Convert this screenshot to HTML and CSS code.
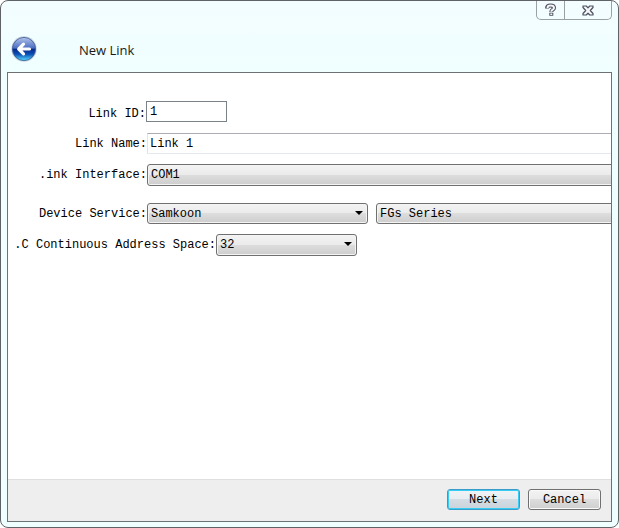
FILE: index.html
```html
<!DOCTYPE html>
<html lang="en">
<head>
<meta charset="utf-8">
<title>New Link</title>
<link rel="stylesheet" href="styles.css">
</head>
<body>
<div class="window">
  <header class="titlebar">
    <div class="heading">
      <button class="back" type="button" aria-label="Back">
        <svg width="26" height="26" viewBox="0 0 26 26" aria-hidden="true">
          <defs>
            <linearGradient id="orb" x1="0" y1="0" x2="0" y2="1">
              <stop offset="0" stop-color="#b4c4ea"/>
              <stop offset=".45" stop-color="#4c70c4"/>
              <stop offset=".52" stop-color="#08298c"/>
              <stop offset=".72" stop-color="#0a4fb4"/>
              <stop offset="1" stop-color="#58dcff"/>
            </linearGradient>
          </defs>
          <circle cx="13" cy="13" r="12.7" fill="#c9d3da"/>
          <circle cx="13" cy="13" r="11.6" fill="url(#orb)" stroke="#3a5796" stroke-width=".8"/>
          <path d="M8 13H18.500M12.500 8.200 7.700 13 12.500 17.800" fill="none" stroke="#fff" stroke-width="3.200" stroke-linecap="round" stroke-linejoin="round"/>
        </svg>
      </button>
      <h1>New Link</h1>
    </div>
    <div class="caption">
      <button class="help" type="button" aria-label="Help">
        <svg width="12" height="14" viewBox="0 0 12 14" fill="none" aria-hidden="true">
          <path d="M2 5.500C2 3.300 3.500 2.600 5.500 2.600S9 3.400 9 5C9 6.900 6.300 6.500 6.300 9M6.300 9.800V12.800" stroke="#4c505e" stroke-width="4"/>
          <path d="M2.500 5C2.500 3.300 3.700 2.600 5.500 2.600S9 3.400 9 5C9 6.900 6.300 6.500 6.300 8.800M6.300 10.400V12" stroke="#f4f6f8" stroke-width="2"/>
        </svg>
      </button>
      <button class="close" type="button" aria-label="Close">
        <svg width="12" height="11" viewBox="0 0 12 11" aria-hidden="true">
          <path d="M1 1H4.300L6 2.800 7.700 1H11V2.500L8.300 5.500 11 8.500V10H7.700L6 8.200 4.300 10H1V8.500L3.700 5.500 1 2.500z" fill="#f4f6f8" stroke="#4c505e" stroke-width="1.200" stroke-linejoin="round"/>
        </svg>
      </button>
    </div>
  </header>
  <form class="panel">
    <div class="fields">
      <div class="row row-id">
        <label for="link-id">Link ID:</label>
        <input class="id" id="link-id" type="text" value="1">
      </div>
      <div class="row row-name">
        <label for="link-name">Link Name:</label>
        <input class="name" id="link-name" type="text" value="Link 1">
      </div>
      <div class="row row-interface">
        <label for="interface">.ink Interface:</label>
        <span class="combo wide"><select id="interface"><option>COM1</option></select></span>
      </div>
      <div class="row row-device">
        <label for="device">Device Service:</label>
        <span class="combo device"><select id="device"><option>Samkoon</option></select></span>
        <span class="combo wide"><select aria-label="Device series"><option>FGs Series</option></select></span>
      </div>
      <div class="row row-space">
        <label class="long" for="space">.C Continuous Address Space:</label>
        <span class="combo space"><select id="space"><option>32</option></select></span>
      </div>
    </div>
    <footer class="actions">
      <button class="push default" type="button">Next</button>
      <button class="push" type="button">Cancel</button>
    </footer>
  </form>
</div>
</body>
</html>
```
FILE: styles.css
```css
* {
  box-sizing: border-box;
}

body {
  margin: 0;
  background: #fff;
  color: #000;
  font: 12px/16px "Liberation Mono", monospace;
}

button,
input,
select {
  margin: 0;
  color: inherit;
  font: inherit;
}

.window {
  display: flex;
  flex-direction: column;
  min-height: 100vh;
  padding: 0 6px 5px;
  border: 1px solid #5f6366;
  border-radius: 8px;
  background: linear-gradient(#f3fdff, #efffff 80px);
}

.titlebar {
  display: flex;
  justify-content: space-between;
  align-items: flex-start;
  height: 71px;
}

.heading {
  display: flex;
  align-items: center;
  gap: 42px;
  padding: 35px 0 0 4px;
}

.back {
  display: flex;
  padding: 0;
  border: 0;
  background: none;
}

h1 {
  margin: 0;
  padding-top: 2px;
  color: #1a1a1a;
  font: 13px/20px "Open Sans", sans-serif;
}

.caption {
  display: flex;
  border: 1px solid #9aa0a3;
  border-top: 0;
  border-radius: 0 0 5px 5px;
}

.caption button {
  display: flex;
  align-items: center;
  justify-content: center;
  height: 18px;
  padding: 0;
  border: 0;
  background: none;
}

.caption .help {
  width: 28px;
  border-right: 1px solid #9aa0a3;
}

.caption .close {
  width: 46px;
}

.panel {
  display: flex;
  flex: 1;
  flex-direction: column;
  overflow: hidden;
  border: 1px solid #6d7173;
  background: #fff;
}

.fields {
  flex: 1;
  padding-top: 28px;
}

.row {
  display: flex;
  align-items: center;
  height: 21px;
}

.row-name {
  margin-top: 11px;
}

.row-interface {
  height: 22px;
  margin-top: 10px;
}

.row-device {
  margin-top: 17px;
}

.row-space {
  height: 22px;
  margin-top: 10px;
}

label {
  flex: none;
  width: 139px;
  text-align: right;
  white-space: nowrap;
}

.row-id label {
  width: 138px;
  padding-top: 4px;
}

label.long {
  width: 208px;
}

input {
  height: 21px;
  padding: 0 3px;
  border: 1px solid #7c828a;
  outline: 0;
  background: #fff;
}

.id {
  width: 81px;
}

.name {
  flex: 1;
  margin-right: -8px;
  padding: 0 2px;
  border-color: #abadb3 #e3e9ef #e3e9ef #e2e3ea;
}

.combo {
  position: relative;
  height: 100%;
}

.combo::after {
  position: absolute;
  top: 8px;
  right: 5px;
  border: 4px solid transparent;
  border-top-color: #000;
  border-bottom: 0;
  content: "";
  pointer-events: none;
}

.combo select {
  width: 100%;
  height: 100%;
  padding: 0 3px;
  border: 1px solid #707070;
  border-radius: 3px;
  outline: 0;
  background: linear-gradient(#f3f3f3, #ebebeb 48%, #dddddd 50%, #cdcdcd);
  box-shadow: inset 0 0 0 1px #f4f4f4;
  appearance: none;
}

.wide {
  flex: 1;
  margin-right: -24px;
}

.device {
  width: 221px;
  margin-right: 8px;
}

.space {
  width: 141px;
}

.actions {
  display: flex;
  justify-content: flex-end;
  gap: 8px;
  padding: 9px 10px 11px;
  border-top: 1px solid #dfdfdf;
  background: #eee;
}

.push {
  width: 73px;
  height: 21px;
  padding: 0;
  border: 1px solid #707070;
  border-radius: 3px;
  background: linear-gradient(#f3f3f3, #ebebeb 48%, #dddddd 50%, #cfcfcf);
  box-shadow: inset 0 0 0 1px #fafafa;
}

.default {
  border-color: #3a9cc8;
  background: linear-gradient(#f0f3f5, #e7edf1 48%, #d4dde3 50%, #cbd3da);
  box-shadow: inset 0 0 0 1px #35cdf5;
}
```
